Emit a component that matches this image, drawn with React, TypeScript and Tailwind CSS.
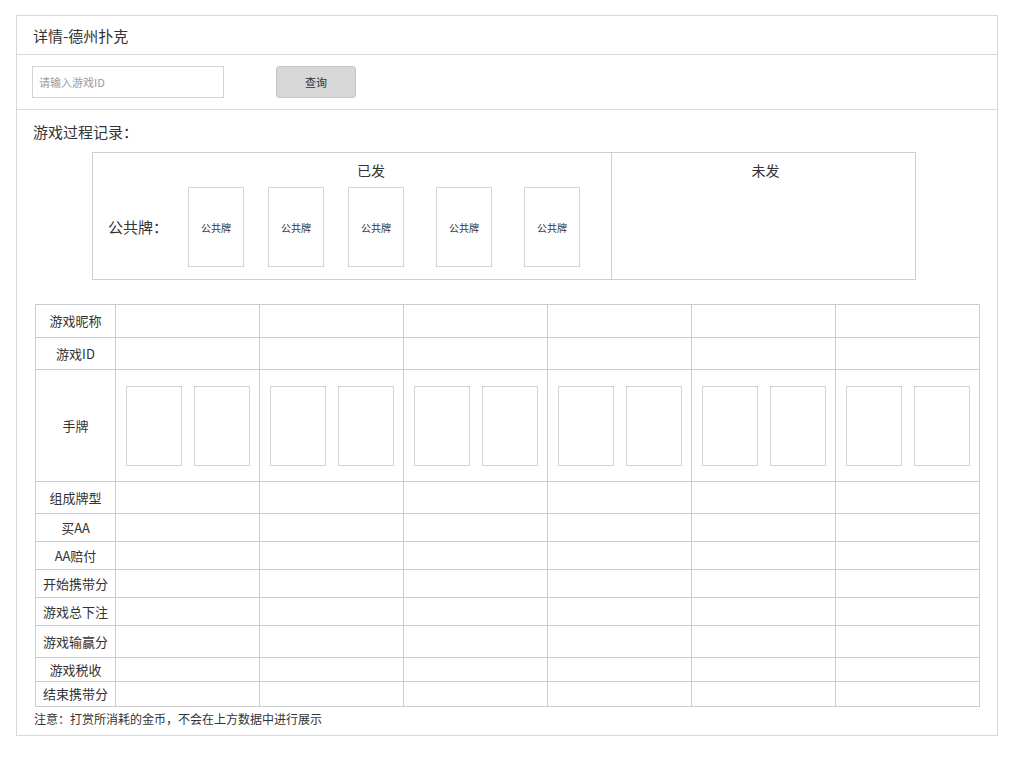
import React from "react";

const labels: { text: string; h: string }[] = [
  { text: "游戏昵称", h: "h-[32px]" },
  { text: "游戏ID", h: "h-[32px]" },
  { text: "手牌", h: "h-[112px]" },
  { text: "组成牌型", h: "h-[32px]" },
  { text: "买AA", h: "h-[28px]" },
  { text: "AA赔付", h: "h-[28px]" },
  { text: "开始携带分", h: "h-[28px]" },
  { text: "游戏总下注", h: "h-[28px]" },
  { text: "游戏输赢分", h: "h-[32px]" },
  { text: "游戏税收", h: "h-[24px]" },
  { text: "结束携带分", h: "h-[25px]" },
];

const cols = [0, 1, 2, 3, 4, 5];

export default function App() {
  return (
    <div
      className="w-[1020px] h-[757px] bg-white pt-[15px] pl-[16px] text-[#333]"
      style={{ fontFamily: '"Noto Sans CJK SC", "Noto Sans", sans-serif' }}
    >
      <div className="w-[982px] h-[721px] border border-[#d9d9d9]">
        <div className="h-[39px] border-b border-[#d9d9d9] flex items-center pl-[16px] text-[15px] leading-none">
          详情-德州扑克
        </div>
        <div className="h-[55px] border-b border-[#d9d9d9] flex items-center pl-[15px]">
          <input
            className="w-[192px] h-[32px] border border-[#d3d3d3] px-[6px] text-[11px] outline-none placeholder:text-[#9a9a9a]"
            placeholder="请输入游戏ID"
          />
          <button className="ml-[52px] w-[80px] h-[32px] bg-[#d7d7d7] border border-[#c6c6c6] rounded-[3px] text-[11px] text-[#333]">
            查询
          </button>
        </div>
        <div className="pl-[16px] pt-[12px] text-[15px] leading-[20px]">游戏过程记录：</div>
        <div className="ml-[75px] mt-[10px] w-[824px] h-[128px] border border-[#cfcfcf] flex">
          <div className="w-[519px] border-r border-[#cfcfcf] flex flex-col">
            <div className="pl-[38px] pt-[7px] text-center text-[14px] leading-[20px]">已发</div>
            <div className="flex items-center mt-[7px]">
              <div className="pl-[15px] w-[95px] text-[15px]">公共牌：</div>
              {["", "ml-[24px]", "ml-[24px]", "ml-[32px]", "ml-[32px]"].map((m, i) => (
                <div
                  key={i}
                  className={`${m} w-[56px] h-[80px] border border-[#d3d3d3] flex items-center justify-center text-[10px]`}
                >
                  公共牌
                </div>
              ))}
            </div>
          </div>
          <div className="flex-1 flex flex-col">
            <div className="pt-[7px] pl-[4px] text-center text-[14px] leading-[20px]">未发</div>
          </div>
        </div>
        <div className="ml-[18px] mt-[24px] flex">
          <div className="w-[80px] shrink-0 border border-[#cccccc] border-r-0">
            {labels.map((l, i) => (
              <div
                key={i}
                className={`${l.h} ${i > 0 ? "border-t border-[#cccccc]" : ""} flex items-center justify-center text-[13px]`}
              >
                {l.text}
              </div>
            ))}
          </div>
          {cols.map((c) => (
            <div
              key={c}
              className={`w-[145px] shrink-0 border border-[#cccccc] flex flex-col ${c > 0 ? "-ml-px" : ""}`}
            >
              {labels.map((l, i) => (
                <div
                  key={i}
                  className={`${l.h} ${i > 0 ? "border-t border-[#cccccc]" : ""} flex items-center justify-center gap-[12px]`}
                >
                  {i === 2 ? (
                    <>
                      <div className="w-[56px] h-[80px] border border-[#d3d3d3]" />
                      <div className="w-[56px] h-[80px] border border-[#d3d3d3]" />
                    </>
                  ) : null}
                </div>
              ))}
            </div>
          ))}
        </div>
        <div className="pl-[17px] pt-[4px] text-[12px] leading-[16px]">
          注意：打赏所消耗的金币，不会在上方数据中进行展示
        </div>
      </div>
    </div>
  );
}
